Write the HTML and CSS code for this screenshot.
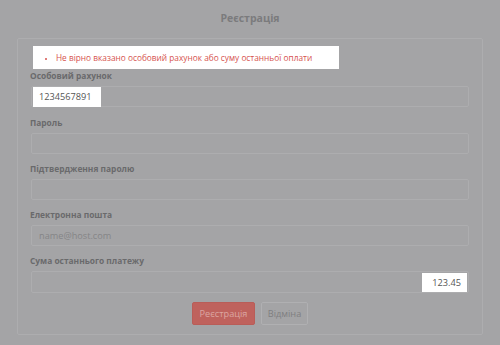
FILE: index.html
```html
<!DOCTYPE html>
<html>
<head>
<meta charset="utf-8">
<link rel="stylesheet" href="styles.css">
</head>
<body>
<div class="page">
  <h1 class="title">Реєстрація</h1>
  <div class="panel">
    <div class="alert">
      <ul class="alert-list">
        <li>Не вірно вказано особовий рахунок або суму останньої оплати</li>
      </ul>
    </div>
    <div class="field field-first">
      <div class="label">Особовий рахунок</div>
      <div class="input"><span class="spot">1234567891</span></div>
    </div>
    <div class="field">
      <div class="label">Пароль</div>
      <div class="input"></div>
    </div>
    <div class="field">
      <div class="label">Підтвердження паролю</div>
      <div class="input"></div>
    </div>
    <div class="field">
      <div class="label">Електронна пошта</div>
      <div class="input"><span class="placeholder">name@host.com</span></div>
    </div>
    <div class="field">
      <div class="label">Сума останнього платежу</div>
      <div class="input input-right input-tall"><span class="spot spot-right">123.45</span></div>
    </div>
    <div class="actions">
      <button class="btn btn-primary">Реєстрація</button>
      <button class="btn btn-default">Відміна</button>
    </div>
  </div>
</div>
</body>
</html>
```
FILE: styles.css
```css
* { box-sizing: border-box; }
html, body {
  margin: 0;
  padding: 0;
  background: #a4a4a6;
  font-family: "Open Sans", "Liberation Sans", sans-serif;
}
.page {
  width: 500px;
  height: 345px;
  overflow: hidden;
}
.title {
  margin: 0;
  height: 38px;
  line-height: 36px;
  text-align: center;
  font-size: 10.5px;
  font-weight: 700;
  color: #7b7b7d;
}
.panel {
  margin: 0 17px;
  border: 1px solid #adadaf;
  border-radius: 2px;
  padding: 7px 13px 9px 13px;
}
.alert {
  width: 306px;
  height: 23px;
  margin-left: 2px;
  background: #ffffff;
  display: flex;
  align-items: center;
}
.alert-list {
  margin: 0;
  padding: 0 0 0 23px;
  font-size: 8.3px;
  color: #d6524e;
}
.alert-list li::marker { font-size: 7px; }
.field {
  display: flex;
  flex-direction: column;
  margin-bottom: 9px;
}
.field-first {
  margin-top: 1px;
  margin-bottom: 10px;
}
.label {
  font-size: 8.4px;
  font-weight: 700;
  line-height: 12px;
  height: 12px;
  margin-bottom: 4px;
  margin-left: -1px;
  color: #6a6a6c;
}
.input {
  height: 21px;
  border: 1px solid #adadaf;
  border-radius: 2px;
  display: flex;
  align-items: center;
  padding: 0 1px;
}
.input-tall { height: 22px; }
.input-right { justify-content: flex-end; }
.spot {
  background: #ffffff;
  height: 20px;
  display: flex;
  align-items: center;
  padding: 0 6px;
  font-size: 9.2px;
  color: #555555;
  width: 68px;
}
.spot-right {
  width: 45px;
  height: 19px;
  justify-content: flex-end;
}
.placeholder {
  font-size: 9.2px;
  color: #858587;
  padding-left: 6px;
}
.actions {
  display: flex;
  justify-content: center;
  gap: 6px;
  margin-top: 1px;
}
.btn {
  height: 23px;
  border-radius: 2px;
  font-family: "Open Sans", "Liberation Sans", sans-serif;
  font-size: 9.2px;
  padding: 0;
}
.btn-primary {
  background: #bf625d;
  border: 1px solid #b95d58;
  color: #dca6a2;
  width: 63px;
}
.btn-default {
  background: #a4a4a6;
  border: 1px solid #b0b0b2;
  color: #7f7f81;
  width: 47px;
}
```
